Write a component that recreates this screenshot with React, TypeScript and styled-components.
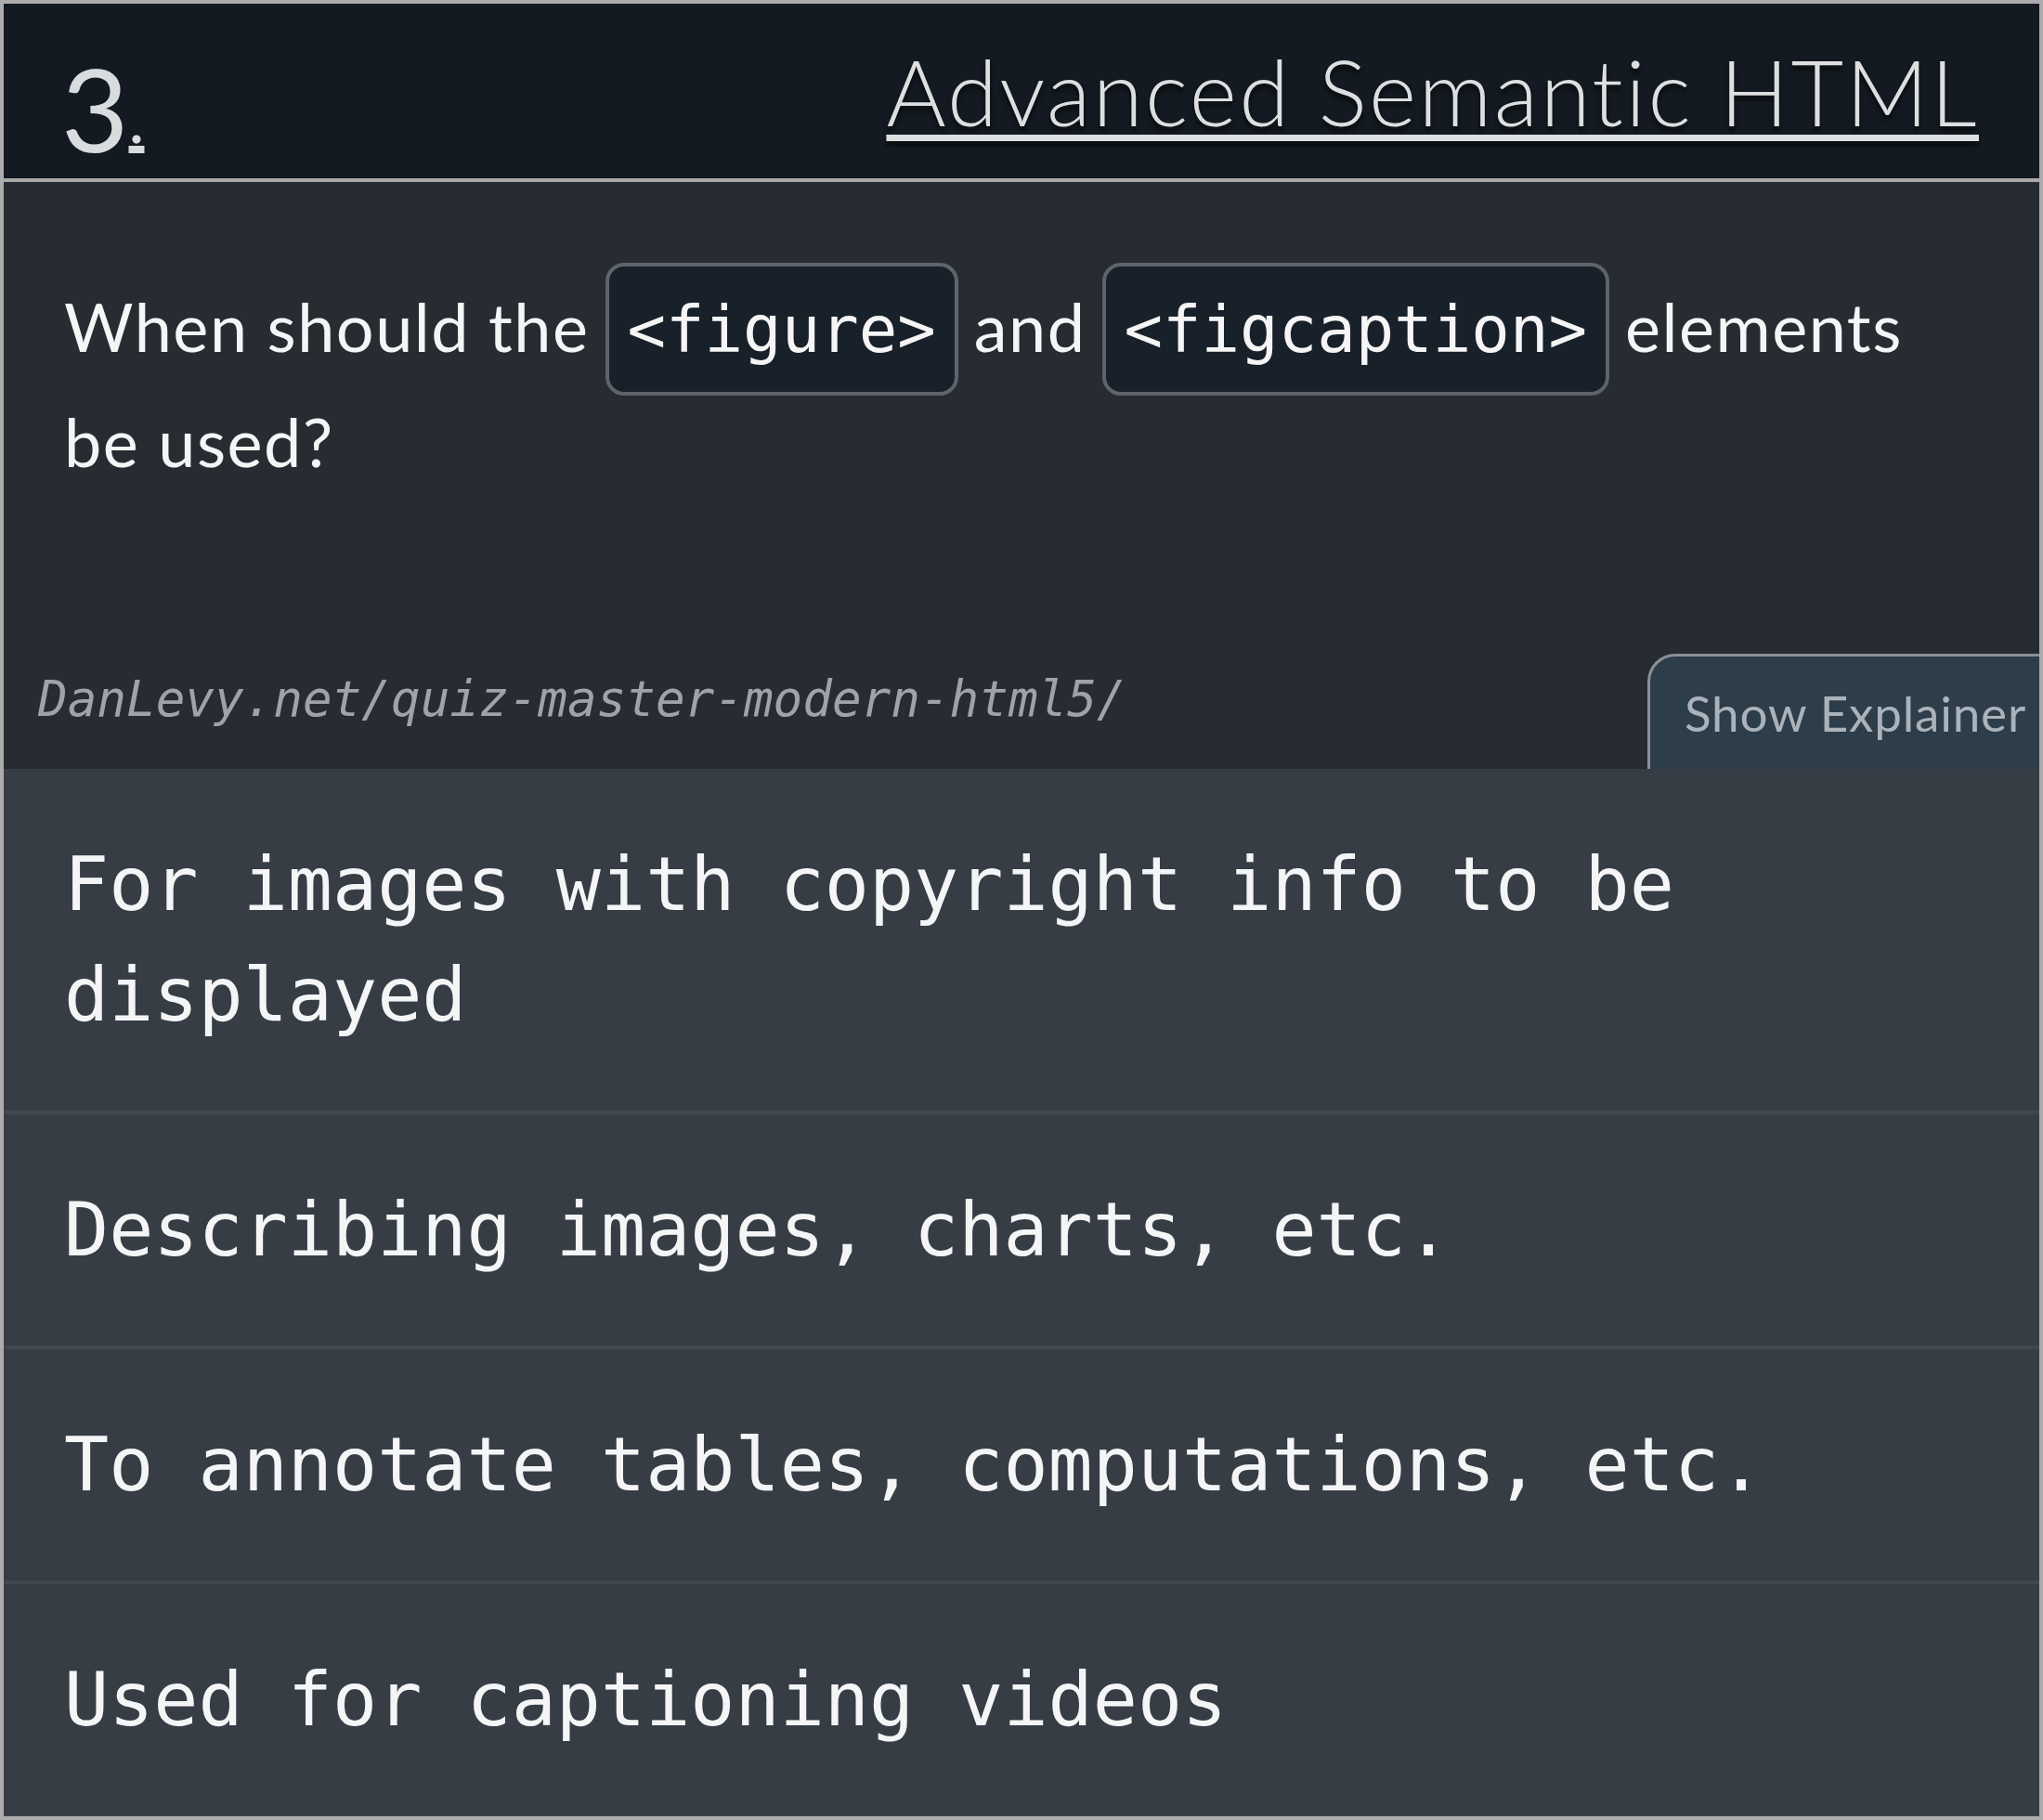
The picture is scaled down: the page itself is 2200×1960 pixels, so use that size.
import styled, { createGlobalStyle } from 'styled-components'

const GlobalStyle = createGlobalStyle`
  html, body {
    margin: 0;
    padding: 0;
    background: #acacac;
  }
  * {
    box-sizing: border-box;
  }
`

const Card = styled.div`
  width: 2200px;
  height: 1960px;
  border: 4px solid #acacac;
  background: #373d45;
  display: flex;
  flex-direction: column;
  overflow: hidden;
`

const Header = styled.header`
  height: 192px;
  flex: none;
  display: flex;
  align-items: center;
  justify-content: space-between;
  padding: 0 65px 0 62px;
  background: #131a21;
  border-bottom: 4px solid #a9a9a9;
`

const Num = styled.div`
  font-family: Lato, "Open Sans", sans-serif;
  font-weight: 400;
  font-size: 125px;
  line-height: 1;
  color: #d9dcdf;
  margin-top: 36px;
`

const Dot = styled.span`
  display: inline-block;
  font-size: 72px;
  vertical-align: 10px;
  text-decoration: underline;
  text-decoration-thickness: 8px;
  text-underline-offset: 3px;
`

const Title = styled.h1`
  margin: 0;
  font-family: Lato, "Open Sans", sans-serif;
  font-weight: 300;
  font-size: 98px;
  line-height: 1;
  letter-spacing: 2.4px;
  color: #dcdee0;
  text-decoration: underline;
  text-decoration-thickness: 7px;
  text-underline-offset: 9px;
  text-shadow: 0 5px 5px rgba(0, 0, 0, 0.6);
`

const Body = styled.section`
  height: 632px;
  flex: none;
  display: flex;
  flex-direction: column;
  justify-content: space-between;
  background: #272c33;
`

const Question = styled.p`
  margin: 0;
  padding: 93px 70px 0 65px;
  font-family: Lato, "Open Sans", sans-serif;
  font-weight: 400;
  font-size: 72px;
  line-height: 124px;
  letter-spacing: 1.5px;
  color: #f4f5f6;
`

const Code = styled.code`
  font-family: "DejaVu Sans Mono", monospace;
  font-size: 69px;
  line-height: 1;
  letter-spacing: 0;
  padding: 28px 20px 27px;
  margin: 0 -3px;
  border: 4px solid #5f646a;
  border-radius: 20px;
  background: #18202a;
  color: #f5f5f5;
`

const Footer = styled.div`
  display: flex;
  align-items: flex-end;
  justify-content: space-between;
`

const Source = styled.div`
  padding-left: 37px;
  margin-bottom: 44px;
  font-family: "DejaVu Sans Mono", monospace;
  font-style: italic;
  font-size: 52.6px;
  line-height: 1.2;
  color: #9fa3a8;
`

const ExplainButton = styled.button`
  height: 124px;
  display: flex;
  align-items: center;
  padding: 0 14px 0 37px;
  border: 3px solid #8a9096;
  border-right: 0;
  border-bottom: 0;
  border-top-left-radius: 30px;
  background: #2e3d4a;
  color: #aab2ba;
  font-family: Lato, "Open Sans", sans-serif;
  font-size: 53px;
  letter-spacing: 0.8px;
  white-space: nowrap;
  cursor: pointer;
`

const Answers = styled.ul`
  margin: 0;
  padding: 0;
  list-style: none;
`

const Answer = styled.li`
  padding: 65px 70px 65px 65px;
  background: #373d45;
  border-bottom: 4px solid #42484f;
  font-family: "DejaVu Sans Mono", monospace;
  font-size: 80px;
  line-height: 119px;
  color: #f4f5f6;
`

const answers = [
  'For images with copyright info to be displayed',
  'Describing images, charts, etc.',
  'To annotate tables, computations, etc.',
  'Used for captioning videos',
]

export default function App() {
  return (
    <>
      <GlobalStyle />
      <Card>
        <Header>
          <Num>
            3<Dot>.</Dot>
          </Num>
          <Title>Advanced Semantic HTML</Title>
        </Header>
        <Body>
          <Question>
            When should the <Code>&lt;figure&gt;</Code> and <Code>&lt;figcaption&gt;</Code> elements be used?
          </Question>
          <Footer>
            <Source>DanLevy.net/quiz-master-modern-html5/</Source>
            <ExplainButton>Show Explainer</ExplainButton>
          </Footer>
        </Body>
        <Answers>
          {answers.map((a) => (
            <Answer key={a}>{a}</Answer>
          ))}
        </Answers>
      </Card>
    </>
  )
}
